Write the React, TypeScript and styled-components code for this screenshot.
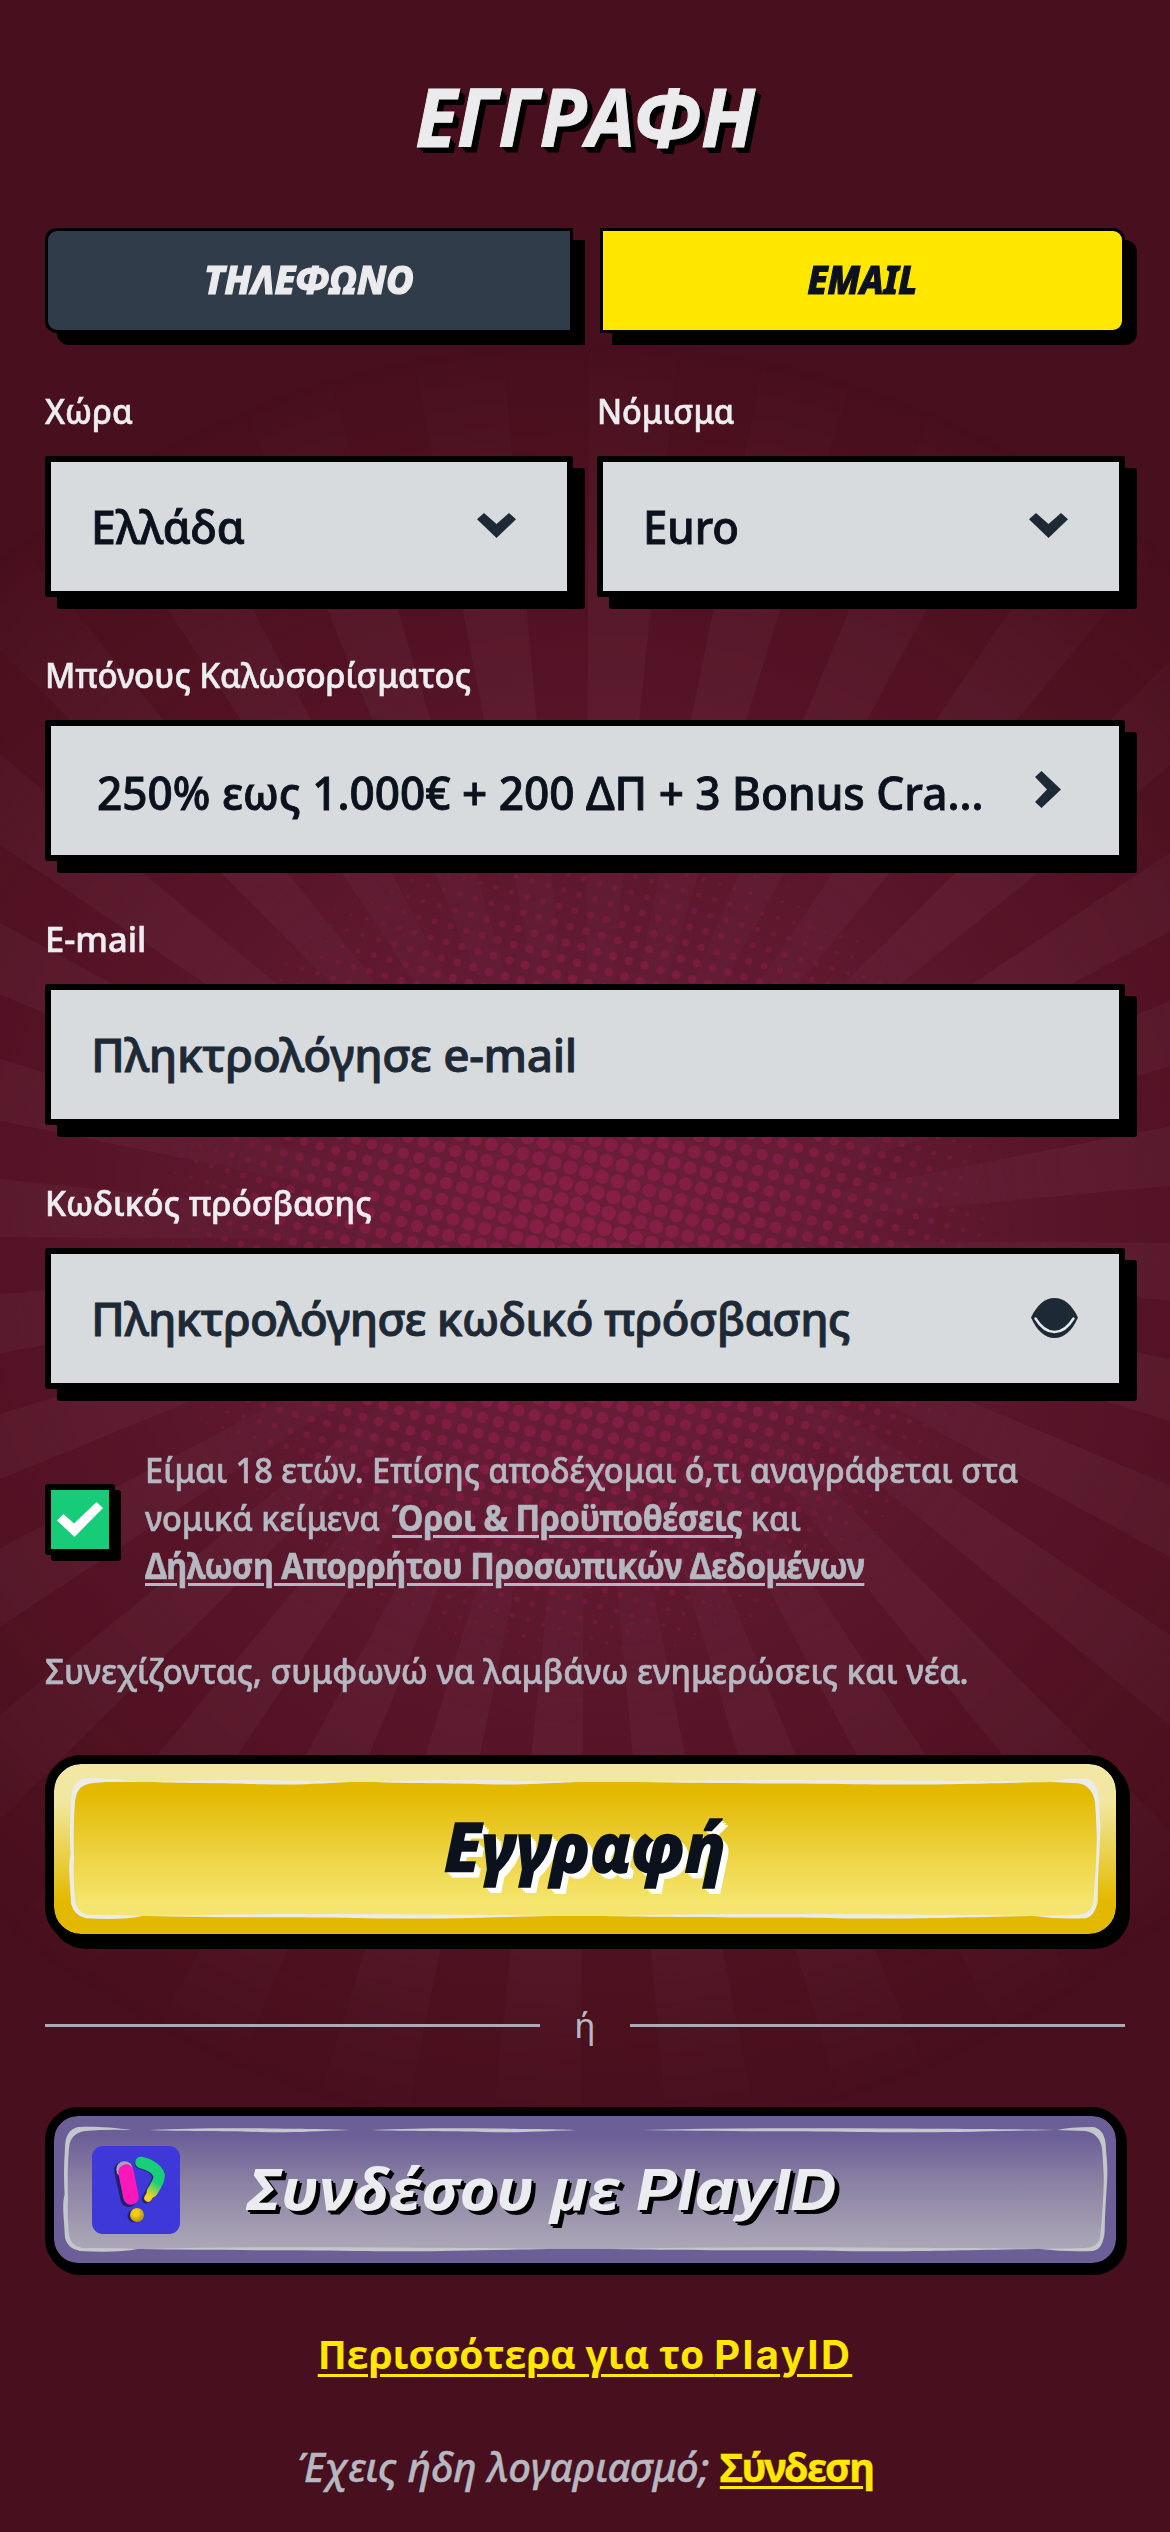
import React from "react";
import styled, { createGlobalStyle, css } from "styled-components";

const GlobalStyle = createGlobalStyle`
  *, *::before, *::after { box-sizing: border-box; }
  body { margin: 0; background: #480f1e; }
`;

const sans = `"Noto Sans", "Open Sans", sans-serif`;
const ink = "#0b121d";
const slate = "#1e2936";
const muted = "#b5b8c0";
const yellow = "#ffe700";

const Page = styled.main`
  position: relative;
  width: 1170px;
  height: 2532px;
  padding: 66px 45px 0;
  overflow: hidden;
  background: #480f1e;
  color: #ebedf0;
  font-family: ${sans};
  display: flex;
  flex-direction: column;
`;

const Backdrop = styled.div`
  position: absolute;
  inset: 0;
  background: radial-gradient(ellipse 900px 900px at 585px 1240px, #6d1e39 0%, #641c35 30%, #581629 60%, #4c111f 88%, #480f1e 100%);
`;

const Rays = styled.div`
  position: absolute;
  inset: 0;
  background: repeating-conic-gradient(
    from 0.3deg at 585px 1240px,
    rgba(106, 46, 66, 0.24) 0deg 5.6deg,
    rgba(74, 5, 22, 0.13) 5.7deg 11.2deg,
    rgba(106, 46, 66, 0.24) 11.25deg
  );
  mask-image: radial-gradient(ellipse 900px 900px at 585px 1240px, transparent 0%, transparent 25%, #000 55%, rgba(0, 0, 0, 0.75) 78%, transparent 100%);
`;

const HalftoneSvg = styled.svg`
  position: absolute;
  inset: 0;
`;

const Content = styled.form`
  position: relative;
  display: flex;
  flex-direction: column;
`;

const Condensed = styled.span<{ $x: number; $origin?: string }>`
  display: inline-block;
  white-space: nowrap;
  transform: scaleX(${(p) => p.$x});
  transform-origin: ${(p) => p.$origin ?? "left"} center;
`;

const Title = styled.h1`
  margin: 0 0 62px;
  text-align: center;
  font-size: 80px;
  line-height: 100px;
  font-weight: 700;
  font-style: italic;
  color: #ebebed;
  -webkit-text-stroke: 1px #ebebed;
  text-shadow: 2px 2px #000, 4px 4px #000, 6px 6px #000;
`;

const Tabs = styled.div`
  display: grid;
  grid-template-columns: 528px 525px;
  justify-content: space-between;
  margin-bottom: 54px;
`;

const Tab = styled.button<{ $active?: boolean }>`
  height: 105px;
  padding: 0 0 4px;
  border: 3px solid #000;
  border-radius: ${(p) => (p.$active ? "0 12px 12px 0" : "12px 0 0 12px")};
  background: ${(p) => (p.$active ? yellow : "#303c4a")};
  color: ${(p) => (p.$active ? ink : "#ebebed")};
  box-shadow: 12px 12px #000;
  font: italic 800 40px/1 ${sans};
  -webkit-text-stroke: 1.2px currentColor;
`;

const FieldGrid = styled.div`
  display: grid;
  grid-template-columns: 1fr 1fr;
  gap: 54px 24px;
`;

const Field = styled.label<{ $wide?: boolean }>`
  display: flex;
  flex-direction: column;
  gap: 21px;
  ${(p) => p.$wide && css`grid-column: 1 / -1;`}
`;

const FieldLabel = styled.span`
  height: 48px;
  font-size: 35px;
  line-height: 48px;
  font-weight: 500;
  -webkit-text-stroke: 0.6px currentColor;
`;

const Control = styled.div<{ $left?: number; $right?: number }>`
  display: flex;
  align-items: center;
  justify-content: space-between;
  height: 141px;
  padding: 0 ${(p) => p.$right ?? 51}px 2px ${(p) => p.$left ?? 40}px;
  border: 6px solid #000;
  border-radius: 3px;
  background: #d8dbde;
  box-shadow: 12px 12px #000;
  color: ${ink};
  font-size: 46px;
  line-height: 64px;
  font-weight: 500;
  -webkit-text-stroke: 0.9px currentColor;
`;

const OfferText = styled(Condensed)`
  width: 930px;
  margin-right: -40px;
  padding-top: 4px;
`;

const TextInput = styled.input<{ $track: number }>`
  flex: 1;
  min-width: 0;
  height: 100px;
  padding: 0;
  border: 0;
  outline: 0;
  background: transparent;
  font: 500 46px/64px ${sans};
  letter-spacing: ${(p) => p.$track}px;
  color: ${ink};
  &::placeholder {
    color: ${slate};
    opacity: 1;
    -webkit-text-stroke: 0.9px ${slate};
  }
`;

const Consent = styled.div`
  display: flex;
  align-items: center;
  gap: 30px;
  margin-top: 57px;
  height: 144px;
`;

const Checkbox = styled.div`
  flex: none;
  display: flex;
  align-items: center;
  justify-content: center;
  width: 70px;
  height: 71px;
  margin-top: 3px;
  border: 6px solid #000;
  border-radius: 3px;
  background: #16cc78;
  box-shadow: 6px 6px #000;
`;

const ConsentText = styled.p`
  margin: 0;
  white-space: nowrap;
  transform: scaleX(0.93);
  transform-origin: left center;
  font-size: 35px;
  line-height: 48px;
  font-weight: 500;
  color: ${muted};
  -webkit-text-stroke: 0.6px currentColor;
`;

const LegalLink = styled.a<{ $track: number; $indent?: number }>`
  margin-left: ${(p) => p.$indent ?? 0}px;
  font-weight: 700;
  letter-spacing: ${(p) => p.$track}px;
  text-decoration: underline 3px;
  text-underline-offset: 4px;
`;

const Notice = styled.p`
  margin: 57px 0 60px;
  font-size: 35px;
  line-height: 48px;
  height: 48px;
  font-weight: 500;
  color: ${muted};
  -webkit-text-stroke: 0.6px currentColor;
`;

const GoldButton = styled.button`
  display: flex;
  height: 188px;
  padding: 18px;
  border: 9px solid #000;
  border-radius: 36px;
  background: linear-gradient(#f2e8a6 0%, #f1e7a0 22%, #e9cf45 55%, #e3b900 80%) padding-box, #000;
  box-shadow: 2px 2px #000, 5px 6px #000;
`;

const GoldPanel = styled.span`
  position: relative;
  flex: 1;
  display: flex;
  align-items: center;
  justify-content: center;
  padding-bottom: 6px;
  border-radius: 16px;
  background: linear-gradient(#e3b900 8%, #ecd03a 48%, #f5e56e 90%);
  color: ${ink};
  font: italic 800 67px/80px ${sans};
  -webkit-text-stroke: 1.5px currentColor;
  text-shadow: 2px 2px #fff, 4px 4px #fff, 6px 6px #fff;
`;

const Divider = styled.div`
  display: grid;
  grid-template-columns: 495px 1fr 495px;
  align-items: center;
  height: 48px;
  margin: 58px 0;
  text-align: center;
  font-size: 35px;
  line-height: 44px;
  color: ${muted};
`;

const Line = styled.span`
  height: 3px;
  margin-top: 1px;
  background: #adaab8;
`;

const PlayButton = styled.button`
  display: flex;
  height: 165px;
  padding: 14px 11px 14px 12px;
  border: 9px solid #000;
  border-radius: 33px;
  background: #6c5f98 padding-box;
  box-shadow: 2px 3px #000;
`;

const PlayPanel = styled.span`
  position: relative;
  flex: 1;
  display: flex;
  align-items: center;
  padding-left: 26px;
  border-radius: 18px;
  background: linear-gradient(#6c5f98 5%, #8b82a4 45%, #aaa5b5 95%);
`;

const PlayText = styled.span`
  display: flex;
  align-items: baseline;
  gap: 46px;
  margin: -2px 0 0 67px;
  color: #ebecef;
  text-shadow: 2px 2px #000, 4px 4px #000;
  font: italic 700 57px/76px "Open Sans", "Noto Sans", sans-serif;
  white-space: nowrap;
`;

const Brand = styled(Condensed)`
  font-family: "Inter", sans-serif;
  font-size: 56px;
`;

const FrameSvg = styled.svg`
  position: absolute;
  inset: 0;
  width: 100%;
  height: 100%;
  overflow: visible;
`;

const MoreLink = styled.a`
  align-self: center;
  margin-top: 58px;
  height: 48px;
  color: ${yellow};
  font: 700 39px/48px "Open Sans", "Noto Sans", sans-serif;
  text-decoration: underline 3px;
  text-underline-offset: 5px;
  white-space: nowrap;
`;

const LinkBrand = styled.span`
  font-family: "Inter", sans-serif;
  font-size: 40px;
  letter-spacing: 2.4px;
`;

const SignIn = styled.p`
  margin: 65px 0 0;
  height: 48px;
  text-align: center;
  color: ${muted};
  font-size: 40px;
  line-height: 48px;
  font-weight: 500;
  font-style: italic;
  white-space: nowrap;
  -webkit-text-stroke: 0.4px currentColor;
  a {
    color: ${yellow};
    font-weight: 700;
    font-style: normal;
    letter-spacing: -1.8px;
    text-decoration: underline 3px;
    text-underline-offset: 4px;
  }
`;

const DOT_STEP_X = [15.8, 4.6];
const DOT_STEP_Y = [-4.5, 15.9];

function Halftone() {
  const dots: React.ReactNode[] = [];
  for (let i = -32; i <= 32; i++) {
    for (let j = -32; j <= 32; j++) {
      const x = 581.7 + i * DOT_STEP_X[0] + j * DOT_STEP_Y[0];
      const y = 1188 + i * DOT_STEP_X[1] + j * DOT_STEP_Y[1];
      const d = Math.hypot(x - 582, y - 1245) / 425;
      if (d >= 1) continue;
      const r = 7.4 * Math.pow(1 - d * d, 0.6) * (1 - 0.25 * d);
      if (r > 0.8) dots.push(<circle key={`${i}:${j}`} cx={x.toFixed(1)} cy={y.toFixed(1)} r={r.toFixed(2)} />);
    }
  }
  return (
    <HalftoneSvg width="1170" height="2532" viewBox="0 0 1170 2532">
      <defs>
        <radialGradient id="dots" gradientUnits="userSpaceOnUse" cx="582" cy="1245" r="425">
          <stop offset="0" stopColor="#881f47" />
          <stop offset="0.6" stopColor="#7f1c42" />
          <stop offset="1" stopColor="#76193c" stopOpacity="0.5" />
        </radialGradient>
      </defs>
      <g fill="url(#dots)">{dots}</g>
    </HalftoneSvg>
  );
}

const brush = (a: number, b: number, y: number) => {
  const w = b - a;
  return `M${a},${y} C${a + w * 0.2},${y - 2} ${a + w * 0.4},${y - 2} ${a + w * 0.6},${y - 1.500} S${b - w * 0.1},${y - 1} ${b},${y} C${b - w * 0.2},${y + 1.500} ${b - w * 0.3},${y + 3} ${b - w * 0.45},${y + 2} S${a + w * 0.15},${y + 1.500} ${a},${y}Z`;
};

function BrushFrame({ color }: { color: string }) {
  return (
    <FrameSvg viewBox="0 0 1040 119" preserveAspectRatio="none" fill={color}>
      <path d="M66,0 C46,-3 24,-4 12,-3 Q-1,0 -1,18 Q-3,44 -1,70 L2,70 Q1,40 3,18 C4,8 9,2 20,1 Q40,-1 66,0Z" />
      <path d="M-1,64 Q-4,70 -2,92 L-1,108 Q2,119 14,121 Q50,123 72,119 Q50,118 16,118 Q5,116 3,105 Q1,85 2,68Z" />
      <path d="M975,119 Q1000,122 1028,121 Q1038,119 1039,104 L1042,52 Q1042,44 1039,46 Q1038,80 1035,108 Q1033,117 1020,118Z" />
      <path d="M992,0 Q1004,-3 1028,-3 Q1041,-1 1041,20 Q1043,38 1042,52 L1039,52 Q1038,30 1037,18 Q1034,3 1020,1Z" />
      <path d={brush(83, 284, 0)} />
      <path d={brush(306, 512, 0)} />
      <path d={brush(577, 990, 0)} />
      <path d={brush(76, 484, 119)} />
      <path d={brush(540, 970, 119)} />
    </FrameSvg>
  );
}

const ChevronDown = () => (
  <svg width="39" height="25" viewBox="0 0 39 25" fill={slate}>
    <path d="M0 6.2 7 0l12.500 11L32 0l7 6.200L19.500 25z" />
  </svg>
);

const ChevronRight = () => (
  <svg width="26" height="37" viewBox="0 0 26 37" fill={slate}>
    <path d="M6.500 0 26 18.500 6.500 37 0 31l12-12.500L0 6z" />
  </svg>
);

const EyeClosed = () => (
  <svg width="47" height="40" viewBox="0 0 47 40">
    <path d="M0 19.500C6 7 14 0 23.500 0S41 7 47 19.500C41 33 33 40 23.500 40S6 33 0 19.500z" fill={slate} />
    <path d="M4.500 20.500C10 29.500 16 34 23.500 34S37 29.500 42.500 20.500" fill="none" stroke="#e6e9ec" strokeWidth="2.4" strokeLinecap="round" />
  </svg>
);

const Check = () => (
  <svg width="46" height="35" viewBox="0 0 46 35" fill="#fff">
    <path d="M0 18.500 6.500 12 17 21.500 39.500 0 46 6 17.500 35z" />
  </svg>
);

const PlayLogo = () => (
  <svg width="88" height="88" viewBox="0 0 88 88" fill="none" strokeLinecap="round" strokeLinejoin="round">
    <defs>
      <linearGradient id="bend" gradientUnits="userSpaceOnUse" x1="67" y1="34" x2="56" y2="52">
        <stop offset="0.15" stopColor="#17cf79" />
        <stop offset="0.9" stopColor="#f3d51a" />
      </linearGradient>
      <radialGradient id="ball" cx="0.4" cy="0.35" r="0.7">
        <stop offset="0.3" stopColor="#f2cc12" />
        <stop offset="1" stopColor="#a98a16" />
      </radialGradient>
    </defs>
    <rect width="88" height="88" rx="11" fill="#3f38d9" />
    <path d="M30 24 36.500 53" stroke="#20206f" strokeWidth="16" />
    <path d="M47 18C60 22 68 28 63 36L54 53" stroke="#252482" strokeWidth="9" />
    <circle cx="42" cy="70" r="6.500" fill="#20206f" />
    <path d="M32.500 23.500V23.400" stroke="#a9a3b4" strokeWidth="16.500" />
    <path d="M34 26 39 51" stroke="#fb18bb" strokeWidth="15.500" />
    <path d="M49 16.500C57 18 65 23 67 29" stroke="#17cf79" strokeWidth="11.500" />
    <path d="M67 29C68 34 63 41 60 46" stroke="url(#bend)" strokeWidth="11" />
    <path d="M66 35C63 42 59 47 56 52" stroke="url(#bend)" strokeWidth="7.500" />
    <circle cx="45" cy="69" r="7" fill="url(#ball)" />
  </svg>
);

export default function App() {
  return (
    <>
      <GlobalStyle />
      <Page>
        <Backdrop />
        <Rays />
        <Halftone />
        <Content>
          <Title>
            <Condensed $x={0.965} $origin="center">ΕΓΓΡΑΦΗ</Condensed>
          </Title>
          <Tabs>
            <Tab type="button">
              <Condensed $x={0.945} $origin="center">ΤΗΛΕΦΩΝΟ</Condensed>
            </Tab>
            <Tab type="button" $active>
              <Condensed $x={0.91} $origin="center">EMAIL</Condensed>
            </Tab>
          </Tabs>
          <FieldGrid>
            <Field>
              <FieldLabel><Condensed $x={0.94}>Χώρα</Condensed></FieldLabel>
              <Control>
                <Condensed $x={0.965}>Ελλάδα</Condensed>
                <ChevronDown />
              </Control>
            </Field>
            <Field>
              <FieldLabel><Condensed $x={0.925}>Νόμισμα</Condensed></FieldLabel>
              <Control>
                <Condensed $x={0.95}>Euro</Condensed>
                <ChevronDown />
              </Control>
            </Field>
            <Field $wide>
              <FieldLabel><Condensed $x={0.943}>Μπόνους Καλωσορίσματος</Condensed></FieldLabel>
              <Control $left={46} $right={58}>
                <OfferText $x={0.96}>250% εως 1.000€ + 200 ΔΠ + 3 Bonus Cra...</OfferText>
                <ChevronRight />
              </Control>
            </Field>
            <Field $wide>
              <FieldLabel><Condensed $x={0.985}>E-mail</Condensed></FieldLabel>
              <Control>
                <TextInput type="text" placeholder="Πληκτρολόγησε e-mail" $track={-0.35} />
              </Control>
            </Field>
            <Field $wide>
              <FieldLabel><Condensed $x={0.95}>Κωδικός πρόσβασης</Condensed></FieldLabel>
              <Control $right={41}>
                <TextInput type="password" placeholder="Πληκτρολόγησε κωδικό πρόσβασης" $track={-0.8} />
                <EyeClosed />
              </Control>
            </Field>
          </FieldGrid>
          <Consent>
            <Checkbox><Check /></Checkbox>
            <ConsentText>
              Είμαι 18 ετών. Επίσης αποδέχομαι ό,τι αναγράφεται στα
              <br />
              νομικά κείμενα <LegalLink $track={-0.45} $indent={4}>Όροι &amp; Προϋποθέσεις</LegalLink> και
              <br />
              <LegalLink $track={-0.6}>Δήλωση Απορρήτου Προσωπικών Δεδομένων</LegalLink>
            </ConsentText>
          </Consent>
          <Notice>
            <Condensed $x={0.946}>Συνεχίζοντας, συμφωνώ να λαμβάνω ενημερώσεις και νέα.</Condensed>
          </Notice>
          <GoldButton type="button">
            <GoldPanel>
              <BrushFrame color="#ebebea" />
              Εγγραφή
            </GoldPanel>
          </GoldButton>
          <Divider>
            <Line />
            ή
            <Line />
          </Divider>
          <PlayButton type="button">
            <PlayPanel>
              <BrushFrame color="#c3c6cb" />
              <PlayLogo />
              <PlayText>
                <Condensed $x={1.088}>Συνδέσου με</Condensed>
                <Brand $x={1.14}>PlayID</Brand>
              </PlayText>
            </PlayPanel>
          </PlayButton>
          <MoreLink>Περισσότερα για το <LinkBrand>PlayID</LinkBrand></MoreLink>
          <SignIn>Έχεις ήδη λογαριασμό; <a>Σύνδεση</a></SignIn>
        </Content>
      </Page>
    </>
  );
}
